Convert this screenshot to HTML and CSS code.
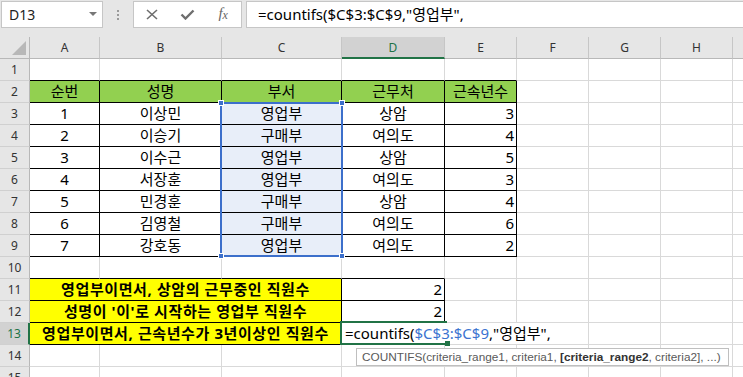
FILE: index.html
```html
<!DOCTYPE html>
<html lang="ko">
<head>
    <meta charset="UTF-8">
    <title>COUNTIFS 예제</title>
    <link rel="stylesheet" href="styles.css">
</head>
<body>
    <!-- Formula bar -->
    <div class="formula-bar">
        <div class="name-box">D13<span class="drop"></span></div>
        <div class="grip"><span></span><span></span><span></span></div>
        <div class="fx-buttons">
            <span class="fx-btn"><svg width="12" height="11" viewBox="0 0 12 11"><path d="M1 1l10 9M11 1L1 10" stroke="#6e6e6e" stroke-width="1.6" fill="none"/></svg></span>
            <span class="fx-btn"><svg width="15" height="11" viewBox="0 0 15 11"><path d="M1.5 5.5l4 4 8-8" stroke="#6e6e6e" stroke-width="2.4" fill="none"/></svg></span>
            <span class="fx-btn fx"><i>f</i><i class="sub">x</i></span>
        </div>
        <div class="formula-input">=countifs($C$3:$C$9,"영업부",</div>
    </div>

    <!-- Sheet -->
    <div class="sheet">
        <div class="row">
            <div class="corner"><svg width="30" height="22" viewBox="0 0 30 22"><polygon points="12,18 26,18 26,4" fill="#b8b8b8"/></svg></div>
            <div class="ch">A</div><div class="ch">B</div><div class="ch">C</div><div class="ch on">D</div>
            <div class="ch">E</div><div class="ch">F</div><div class="ch">G</div><div class="ch">H</div><div class="ch"></div>
        </div>
        <div class="row">
            <div class="rh">1</div>
            <div class="c top"></div><div class="c top"></div><div class="c top"></div><div class="c top"></div><div class="c top"></div>
            <div class="c"></div><div class="c"></div><div class="c"></div><div class="c"></div>
        </div>
        <div class="row">
            <div class="rh">2</div>
            <div class="c bx hd ctr">순번</div><div class="c bx hd ctr">성명</div><div class="c bx hd ctr">부서</div>
            <div class="c bx hd ctr">근무처</div><div class="c bx hd ctr">근속년수</div>
            <div class="c"></div><div class="c"></div><div class="c"></div><div class="c"></div>
        </div>
        <div class="row">
            <div class="rh">3</div>
            <div class="c bx ctr">1</div><div class="c bx ctr">이상민</div><div class="c bx ctr ref">영업부</div>
            <div class="c bx ctr">상암</div><div class="c bx num">3</div>
            <div class="c"></div><div class="c"></div><div class="c"></div><div class="c"></div>
        </div>
        <div class="row">
            <div class="rh">4</div>
            <div class="c bx ctr">2</div><div class="c bx ctr">이승기</div><div class="c bx ctr ref">구매부</div>
            <div class="c bx ctr">여의도</div><div class="c bx num">4</div>
            <div class="c"></div><div class="c"></div><div class="c"></div><div class="c"></div>
        </div>
        <div class="row">
            <div class="rh">5</div>
            <div class="c bx ctr">3</div><div class="c bx ctr">이수근</div><div class="c bx ctr ref">영업부</div>
            <div class="c bx ctr">상암</div><div class="c bx num">5</div>
            <div class="c"></div><div class="c"></div><div class="c"></div><div class="c"></div>
        </div>
        <div class="row">
            <div class="rh">6</div>
            <div class="c bx ctr">4</div><div class="c bx ctr">서장훈</div><div class="c bx ctr ref">영업부</div>
            <div class="c bx ctr">여의도</div><div class="c bx num">3</div>
            <div class="c"></div><div class="c"></div><div class="c"></div><div class="c"></div>
        </div>
        <div class="row">
            <div class="rh">7</div>
            <div class="c bx ctr">5</div><div class="c bx ctr">민경훈</div><div class="c bx ctr ref">구매부</div>
            <div class="c bx ctr">상암</div><div class="c bx num">4</div>
            <div class="c"></div><div class="c"></div><div class="c"></div><div class="c"></div>
        </div>
        <div class="row">
            <div class="rh">8</div>
            <div class="c bx ctr">6</div><div class="c bx ctr">김영철</div><div class="c bx ctr ref">구매부</div>
            <div class="c bx ctr">여의도</div><div class="c bx num">6</div>
            <div class="c"></div><div class="c"></div><div class="c"></div><div class="c"></div>
        </div>
        <div class="row">
            <div class="rh">9</div>
            <div class="c bx ctr">7</div><div class="c bx ctr">강호동</div><div class="c bx ctr ref">영업부</div>
            <div class="c bx ctr">여의도</div><div class="c bx num">2</div>
            <div class="c"></div><div class="c"></div><div class="c"></div><div class="c"></div>
        </div>
        <div class="row">
            <div class="rh">10</div>
            <div class="c top"></div><div class="c top"></div><div class="c top"></div><div class="c top"></div>
            <div class="c"></div><div class="c"></div><div class="c"></div><div class="c"></div><div class="c"></div>
        </div>
        <div class="row">
            <div class="rh">11</div>
            <div class="c bx lab">영업부이면서, 상암의 근무중인 직원수</div><div class="c bx num">2</div>
            <div class="c"></div><div class="c"></div><div class="c"></div><div class="c"></div><div class="c"></div>
        </div>
        <div class="row">
            <div class="rh">12</div>
            <div class="c bx lab">성명이 '이'로 시작하는 영업부 직원수</div><div class="c bx num">2</div>
            <div class="c"></div><div class="c"></div><div class="c"></div><div class="c"></div><div class="c"></div>
        </div>
        <div class="row">
            <div class="rh on">13</div>
            <div class="c bx lab">영업부이면서, 근속년수가 3년이상인 직원수</div><div class="c bx"></div>
            <div class="c"></div><div class="c"></div><div class="c"></div><div class="c"></div><div class="c"></div>
        </div>
        <div class="row">
            <div class="rh">14</div>
            <div class="c"></div><div class="c"></div><div class="c"></div><div class="c"></div>
            <div class="c"></div><div class="c"></div><div class="c"></div><div class="c"></div><div class="c"></div>
        </div>
        <div class="row">
            <div class="rh">15</div>
            <div class="c"></div><div class="c"></div><div class="c"></div><div class="c"></div>
            <div class="c"></div><div class="c"></div><div class="c"></div><div class="c"></div><div class="c"></div>
        </div>

        <!-- overlays: referenced range, cell editor, active cell, hint -->
        <div class="ref-range"><span class="h tl"></span><span class="h tr"></span><span class="h bl"></span><span class="h br"></span></div>
        <div class="editor">=countifs(<span class="refx">$C$3:$C$9</span>,"영업부",</div>
        <div class="active"></div>
        <div class="tip">COUNTIFS(criteria_range1, criteria1, <b>[criteria_range2</b>, criteria2], ...)</div>
    </div>
</body>
</html>
```

FILE: styles.css
```css
:root {
    --grid: #d9d9d9;
    --head: #e6e6e6;
    --green: #217346;
    --blue: #3c6fcb;
}

* {
    box-sizing: border-box;
}

body {
    margin: 0;
    background: var(--head);
    overflow: hidden;
    font-family: "Noto Sans", "Noto Sans CJK KR", sans-serif;
    color: #000;
}

/* formula bar */
.formula-bar {
    display: flex;
    height: 37px;
    padding: 1px 0 0 1px;
}

.name-box {
    position: relative;
    width: 102px;
    height: 27px;
    border: 1px solid #c6c6c6;
    background: #fff;
    font-size: 14px;
    line-height: 25px;
    padding-left: 7px;
    color: #222;
}

.drop {
    position: absolute;
    right: 5px;
    top: 10px;
    border-left: 4px solid transparent;
    border-right: 4px solid transparent;
    border-top: 4px solid #777;
}

.grip {
    width: 30px;
    height: 27px;
    display: flex;
    flex-direction: column;
    align-items: center;
    justify-content: center;
    gap: 2px;
}

.grip span {
    width: 2px;
    height: 2px;
    background: #9a9a9a;
}

.fx-buttons {
    display: flex;
    width: 109px;
    height: 27px;
    border: 1px solid #c6c6c6;
    background: #fff;
}

.fx-btn {
    width: 36px;
    display: flex;
    align-items: center;
    justify-content: center;
}

.fx {
    font-family: "Liberation Serif", serif;
    font-size: 15px;
    color: #666;
    padding-bottom: 2px;
}

.fx .sub {
    font-size: 12px;
    margin-top: 3px;
}

.formula-input {
    flex: 1;
    margin-left: 4px;
    height: 27px;
    border: 1px solid #c6c6c6;
    border-right: none;
    background: #fff;
    font-size: 15px;
    line-height: 25px;
    padding-left: 11px;
    white-space: nowrap;
}

/* sheet grid */
.sheet {
    position: relative;
    display: grid;
    grid-template-columns: 30px 70px 122px 120px 103px 72px 72px 72px 72px 40px;
    grid-template-rows: repeat(16, 22px);
    background: #fff;
    font-size: 15px;
}

.row {
    display: contents;
}

.corner {
    background: var(--head);
    border-right: 1px solid #b8b8b8;
    border-bottom: 1px solid #b8b8b8;
}

.corner svg {
    display: block;
}

.ch,
.rh {
    background: var(--head);
    text-align: center;
    font-size: 12px;
    line-height: 21px;
    color: #333;
}

.ch {
    border-right: 1px solid #c6c6c6;
    border-bottom: 1px solid #b8b8b8;
}

.rh {
    border-right: 1px solid #b8b8b8;
    border-bottom: 1px solid #d0d0d0;
}

.ch.on {
    background: #d2d2d2;
    border-bottom: 2px solid var(--green);
    color: var(--green);
}

.rh.on {
    background: #d2d2d2;
    border-right: 2px solid var(--green);
    color: var(--green);
}

.c {
    border-right: 1px solid var(--grid);
    border-bottom: 1px solid var(--grid);
    line-height: 21px;
    padding: 0 3px;
    white-space: nowrap;
    overflow: hidden;
}

.top {
    border-bottom-color: #000;
}

.bx {
    border-right-color: #000;
    border-bottom-color: #000;
}

.ctr {
    text-align: center;
}

.num {
    text-align: right;
    padding-right: 2px;
}

.hd {
    background: #92d050;
}

.ref {
    background: #e8eef9;
}

.lab {
    grid-column: span 3;
    background: #ffff00;
    font-weight: bold;
    text-align: center;
    letter-spacing: 0.6px;
}

/* C3:C9 reference outline */
.ref-range {
    position: absolute;
    grid-column: 4 / 5;
    grid-row: 4 / 11;
    top: -1px;
    bottom: 0;
    left: -2px;
    right: -1px;
    border: 2px solid var(--blue);
    pointer-events: none;
}

.ref-range .h {
    position: absolute;
    width: 6px;
    height: 6px;
    background: var(--blue);
    border: 1px solid #fff;
}

.tl { left: -4px; top: -4px; }
.tr { right: -4px; top: -4px; }
.bl { left: -4px; bottom: -4px; }
.br { right: -4px; bottom: -4px; }

/* D13 in edit mode */
.editor {
    position: absolute;
    grid-column: 5 / 7;
    grid-row: 14 / 15;
    top: 0;
    bottom: 1px;
    left: 0;
    right: 0;
    background: #fff;
    padding-left: 3px;
    line-height: 21px;
    white-space: nowrap;
}

.refx {
    color: #3b73d0;
}

.active {
    position: absolute;
    grid-column: 5 / 6;
    grid-row: 14 / 15;
    top: -2px;
    bottom: 0;
    left: -2px;
    right: -2px;
    border: 2px solid var(--green);
    border-right: none;
}

.active::after {
    content: "";
    position: absolute;
    right: -3px;
    bottom: -3px;
    width: 5px;
    height: 5px;
    background: var(--green);
}

.tip {
    position: absolute;
    grid-column: 5 / 11;
    grid-row: 15 / 16;
    top: 3px;
    left: 14px;
    width: 373px;
    height: 18px;
    border: 1px solid #bfbfbf;
    background: #fff;
    padding: 0 5px;
    font-family: "Liberation Sans", Arial, sans-serif;
    font-size: 11.8px;
    line-height: 16px;
    color: #595959;
    white-space: nowrap;
}

.tip b {
    color: #333;
}
```
